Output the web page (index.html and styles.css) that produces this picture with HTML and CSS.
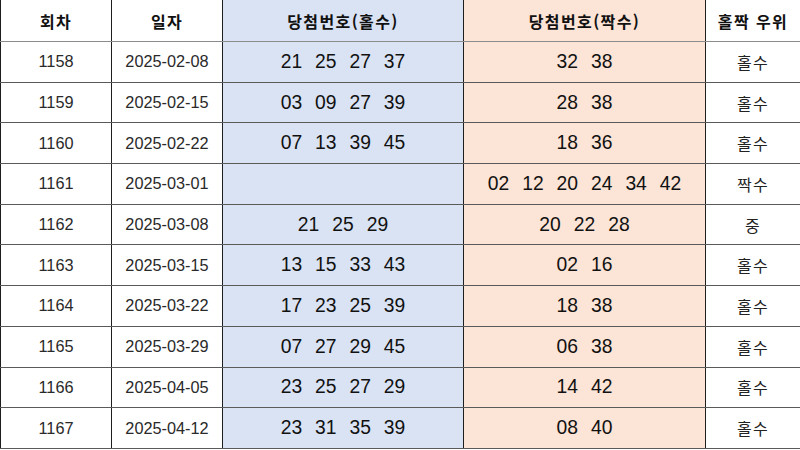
FILE: index.html
```html
<!DOCTYPE html>
<html lang="ko">
<head>
<meta charset="utf-8">
<link rel="stylesheet" href="styles.css">
</head>
<body>
<table class="lotto">
  <colgroup>
    <col class="c-round"><col class="c-date"><col class="c-odd"><col class="c-even"><col class="c-win">
  </colgroup>
  <thead>
    <tr>
      <th>회차</th><th>일자</th><th class="odd">당첨번호(홀수)</th><th class="even">당첨번호(짝수)</th><th class="last">홀짝 우위</th>
    </tr>
  </thead>
  <tbody>
    <tr><td>1158</td><td>2025-02-08</td><td class="odd num">21 25 27 37</td><td class="even num">32 38</td><td class="ko last">홀수</td></tr>
    <tr><td>1159</td><td>2025-02-15</td><td class="odd num">03 09 27 39</td><td class="even num">28 38</td><td class="ko last">홀수</td></tr>
    <tr><td>1160</td><td>2025-02-22</td><td class="odd num">07 13 39 45</td><td class="even num">18 36</td><td class="ko last">홀수</td></tr>
    <tr><td>1161</td><td>2025-03-01</td><td class="odd num"></td><td class="even num">02 12 20 24 34 42</td><td class="ko last">짝수</td></tr>
    <tr><td>1162</td><td>2025-03-08</td><td class="odd num">21 25 29</td><td class="even num">20 22 28</td><td class="ko last">중</td></tr>
    <tr><td>1163</td><td>2025-03-15</td><td class="odd num">13 15 33 43</td><td class="even num">02 16</td><td class="ko last">홀수</td></tr>
    <tr><td>1164</td><td>2025-03-22</td><td class="odd num">17 23 25 39</td><td class="even num">18 38</td><td class="ko last">홀수</td></tr>
    <tr><td>1165</td><td>2025-03-29</td><td class="odd num">07 27 29 45</td><td class="even num">06 38</td><td class="ko last">홀수</td></tr>
    <tr><td>1166</td><td>2025-04-05</td><td class="odd num">23 25 27 29</td><td class="even num">14 42</td><td class="ko last">홀수</td></tr>
    <tr><td>1167</td><td>2025-04-12</td><td class="odd num">23 31 35 39</td><td class="even num">08 40</td><td class="ko last">홀수</td></tr>
  </tbody>
</table>
</body>
</html>
```
FILE: styles.css
```css
html, body {
  margin: 0;
  padding: 0;
  background: #ffffff;
}

.lotto {
  width: 800px;
  table-layout: fixed;
  border-collapse: collapse;
  font-family: "Liberation Sans", Arial, "Noto Sans CJK KR", sans-serif;
  color: #1a1a1a;
}

.c-round { width: 111px; }
.c-date { width: 111px; }
.c-odd { width: 241px; }
.c-even { width: 242px; }
.c-win { width: 95px; }

.lotto th,
.lotto td {
  padding: 0;
  text-align: center;
  vertical-align: middle;
  border-left: 1px solid #1e1e1e;
  border-right: 1px solid #1e1e1e;
  border-bottom: 1px solid #5a5a5a;
  white-space: nowrap;
}

.lotto thead th {
  height: 41px;
  font-family: "Noto Sans CJK KR", sans-serif;
  font-weight: 700;
  font-size: 16px;
  letter-spacing: 1.4px;
  color: #111;
  border-bottom: 1px solid #8c8c8c;
}

.lotto tbody td {
  height: 39.7px;
  font-size: 16.3px;
  color: #2a2a2a;
}

.lotto .odd { background: #dae3f3; }
.lotto .even { background: #fce4d6; }

.lotto td.num {
  font-size: 19.3px;
  word-spacing: 7.6px;
  color: #111;
}

.lotto td.ko {
  font-family: "Noto Sans CJK KR", sans-serif;
  font-weight: 400;
  font-size: 16px;
  letter-spacing: 1.2px;
  color: #222;
}

.lotto .last {
  border-right: 1px solid #444;
}
```
